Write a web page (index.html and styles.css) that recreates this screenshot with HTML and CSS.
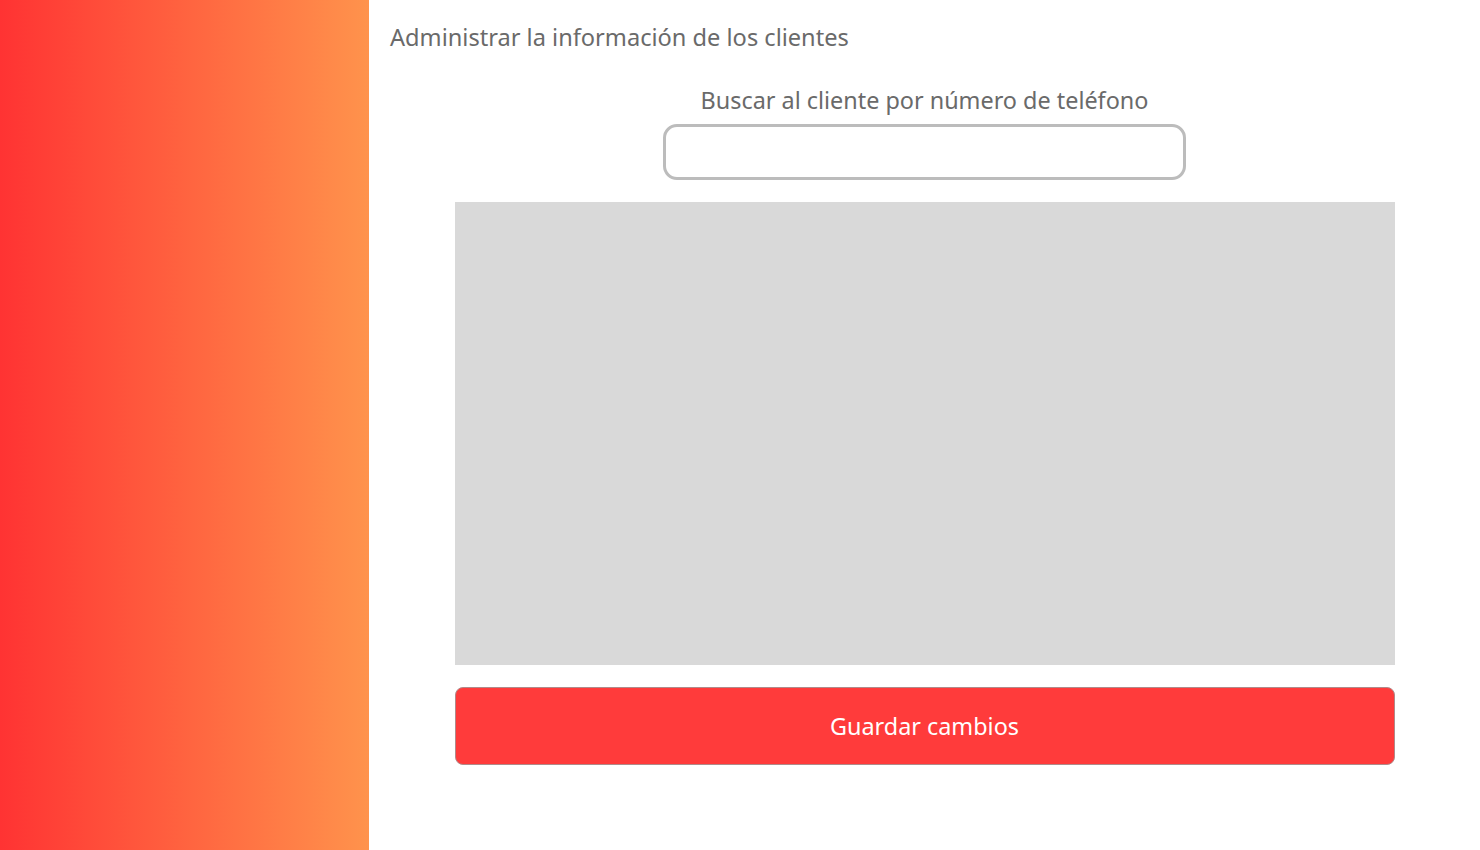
FILE: index.html
```html
<!DOCTYPE html>
<html lang="es">
<head>
<meta charset="utf-8">
<title>Clientes</title>
<link rel="stylesheet" href="styles.css">
</head>
<body>
<div class="layout">
  <aside class="sidebar"></aside>
  <main class="main">
    <h1 class="page-title">Administrar la información de los clientes</h1>
    <section class="search">
      <label class="search-label" for="phone">Buscar al cliente por número de teléfono</label>
      <input class="search-input" id="phone" type="text">
    </section>
    <div class="table-area"></div>
    <button class="save-btn" type="button">Guardar cambios</button>
  </main>
</div>
</body>
</html>
```
FILE: styles.css
```css
html, body {
  margin: 0;
  padding: 0;
  height: 100%;
  background: #fff;
}
body {
  font-family: "Noto Sans", "Open Sans", sans-serif;
  color: #6a6a6a;
}
.layout {
  display: flex;
  height: 850px;
}
.sidebar {
  width: 369px;
  flex: 0 0 369px;
  background: linear-gradient(to right, #ff3333 0%, #ff934c 100%);
}
.main {
  flex: 1;
  display: flex;
  flex-direction: column;
  align-items: center;
}
.page-title {
  align-self: stretch;
  margin: 0;
  padding: 20px 0 0 21px;
  font-size: 23.6px;
  font-weight: 400;
  line-height: 34px;
  color: #6a6a6a;
}
.search {
  display: flex;
  flex-direction: column;
  align-items: center;
  margin-top: 29px;
}
.search-label {
  font-size: 23.4px;
  line-height: 34px;
  color: #6a6a6a;
}
.search-input {
  box-sizing: border-box;
  margin-top: 7px;
  width: 523px;
  height: 56px;
  border: 3px solid #bcbcbc;
  border-radius: 14px;
  background: #fff;
  outline: none;
}
.table-area {
  margin-top: 22px;
  width: 940px;
  height: 463px;
  background: #d9d9d9;
}
.save-btn {
  box-sizing: border-box;
  margin-top: 22px;
  width: 940px;
  height: 78px;
  padding: 0 0 1px;
  background: #ff3b3b;
  border: 1px solid #b08a8a;
  border-radius: 8px;
  color: #fff;
  font-family: "Noto Sans", "Open Sans", sans-serif;
  font-size: 23.4px;
  cursor: pointer;
}
```
